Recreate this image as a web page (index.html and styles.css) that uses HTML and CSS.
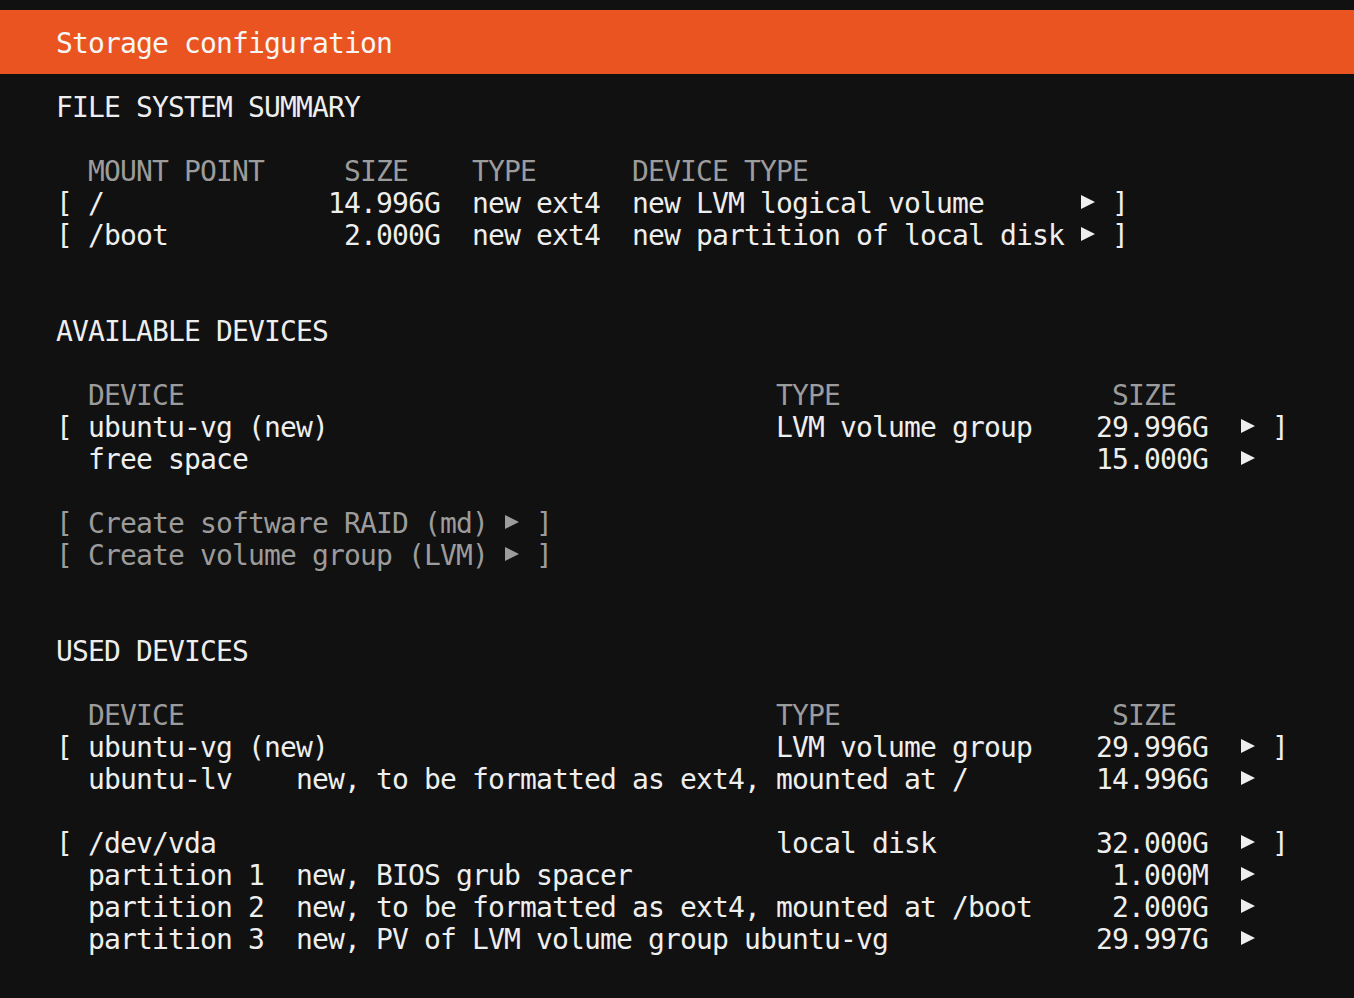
FILE: index.html
```html
<!DOCTYPE html>
<html lang="en">
<head>
  <meta charset="UTF-8">
  <meta name="viewport" content="width=device-width, initial-scale=1.0">
  <title>Storage configuration</title>
  <link rel="stylesheet" href="styles.css">
</head>
<body>
  <div class="titlebar">Storage configuration</div>

  <div class="screen">
    <!-- file system summary -->
    <div class="line">FILE SYSTEM SUMMARY</div>
    <div class="line"></div>
    <div class="line dim">  MOUNT POINT     SIZE    TYPE      DEVICE TYPE</div>
    <div class="line">[ /              14.996G  new ext4  new LVM logical volume      <span class="arrow"></span> ]</div>
    <div class="line">[ /boot           2.000G  new ext4  new partition of local disk <span class="arrow"></span> ]</div>
    <div class="line"></div>
    <div class="line"></div>

    <!-- available devices -->
    <div class="line">AVAILABLE DEVICES</div>
    <div class="line"></div>
    <div class="line dim">  DEVICE                                     TYPE                 SIZE</div>
    <div class="line">[ ubuntu-vg (new)                            LVM volume group    29.996G  <span class="arrow"></span> ]</div>
    <div class="line">  free space                                                     15.000G  <span class="arrow"></span></div>
    <div class="line"></div>
    <div class="line dim">[ Create software RAID (md) <span class="arrow"></span> ]</div>
    <div class="line dim">[ Create volume group (LVM) <span class="arrow"></span> ]</div>
    <div class="line"></div>
    <div class="line"></div>

    <!-- used devices -->
    <div class="line">USED DEVICES</div>
    <div class="line"></div>
    <div class="line dim">  DEVICE                                     TYPE                 SIZE</div>
    <div class="line">[ ubuntu-vg (new)                            LVM volume group    29.996G  <span class="arrow"></span> ]</div>
    <div class="line">  ubuntu-lv    new, to be formatted as ext4, mounted at /        14.996G  <span class="arrow"></span></div>
    <div class="line"></div>
    <div class="line">[ /dev/vda                                   local disk          32.000G  <span class="arrow"></span> ]</div>
    <div class="line">  partition 1  new, BIOS grub spacer                              1.000M  <span class="arrow"></span></div>
    <div class="line">  partition 2  new, to be formatted as ext4, mounted at /boot     2.000G  <span class="arrow"></span></div>
    <div class="line">  partition 3  new, PV of LVM volume group ubuntu-vg             29.997G  <span class="arrow"></span></div>
  </div>
</body>
</html>
```

FILE: styles.css
```css
body {
  margin: 0;
  padding: 10px 0 0 0;
  background-color: #111111;
  color: #eeeeee;
  font-family: "DejaVu Sans Mono", "Liberation Mono", monospace;
  font-size: 28px;
  letter-spacing: -0.857px;
  line-height: 32px;
}
.titlebar {
  background-color: #e95420;
  color: #f6f6f6;
  padding: 18px 56px 14px 56px;
  white-space: pre;
}
.screen {
  padding: 18px 56px 0 56px;
}
.line {
  white-space: pre;
  height: 32px;
}
.dim {
  color: #9c9c9c;
}
/* triangle in one 16px cell */
.arrow {
  display: inline-block;
  width: 16px;
  height: 32px;
  vertical-align: top;
  position: relative;
}
.arrow::before {
  content: "";
  position: absolute;
  left: 1px;
  top: 7px;
  border-left: 14px solid currentColor;
  border-top: 7px solid transparent;
  border-bottom: 7px solid transparent;
}
```
